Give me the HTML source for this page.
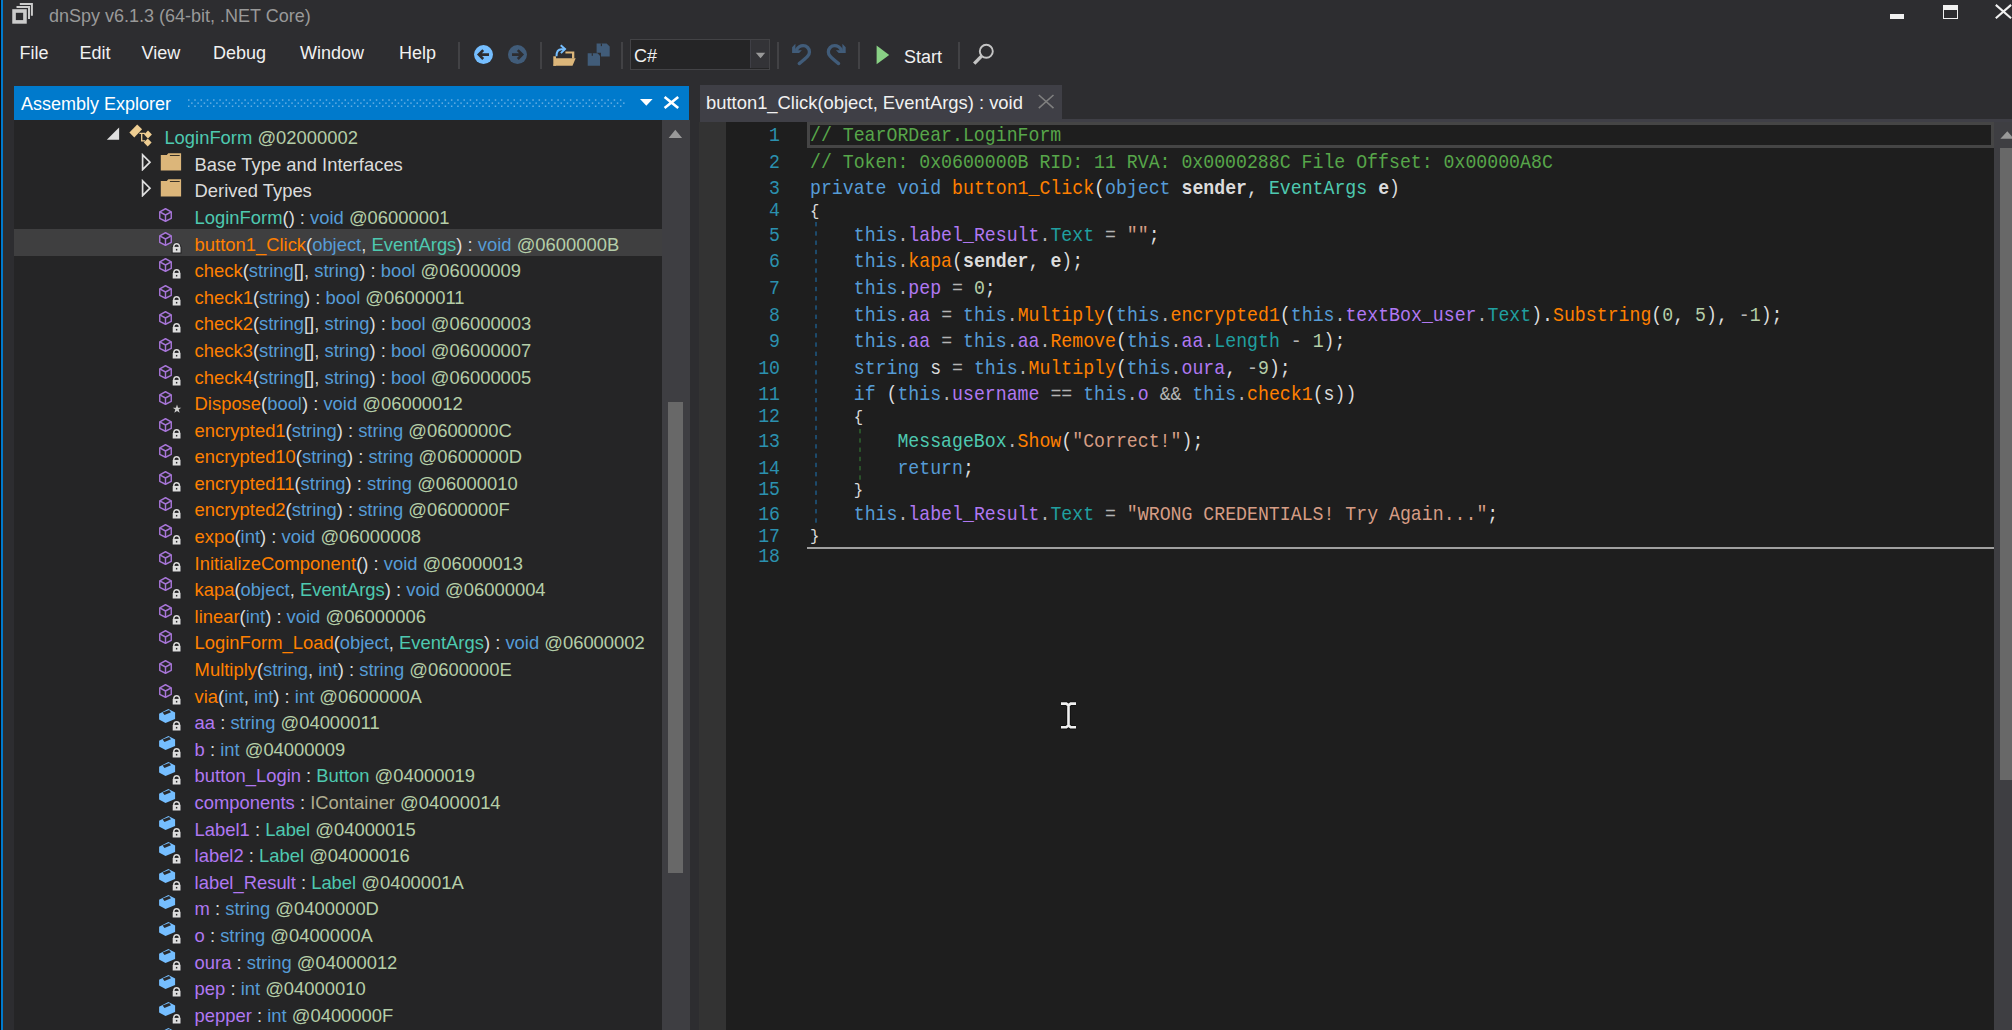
<!DOCTYPE html><html><head><meta charset="utf-8"><style>
*{margin:0;padding:0;box-sizing:border-box}
html,body{width:2012px;height:1030px;overflow:hidden;background:#2D2D30}
body{position:relative;font-family:"Liberation Sans",sans-serif;font-size:18px;color:#F1F1F1}
.a{position:absolute}
.t{position:absolute;white-space:pre;line-height:20px;font-size:18px}
i{font-style:normal}
.row{position:absolute;left:14px;width:648px;height:26.6px}
.rt{position:absolute;white-space:pre;line-height:20px;font-size:18.4px;color:#DCDCDC}
.code{position:absolute;white-space:pre;font-family:"Liberation Mono",monospace;font-size:18.22px;line-height:20px;color:#DCDCDC;transform:scaleY(1.09);transform-origin:0 14.85px}
.code b{font-weight:bold;color:#DCDCDC}
.ln{position:absolute;white-space:pre;font-family:"Liberation Mono",monospace;font-size:18.22px;line-height:20px;color:#2B91AF;text-align:right;width:60px;left:720px;transform:scaleY(1.12);transform-origin:0 14.85px}
</style></head><body>
<div class="a" style="left:0;top:0;width:1.3px;height:1030px;background:#0b0b0b"></div>
<div class="a" style="left:1.3px;top:0;width:1.9px;height:1030px;background:#007ACC"></div>
<svg class="a" style="left:0;top:0" width="40" height="32" viewBox="0 0 40 32">
<g fill="none" stroke="#CCCCCC">
<rect x="14.05" y="11.0" width="10.9" height="10.9" stroke-width="3.6"/>
<path d="M16.5 7.1 H29 V19" stroke-width="2"/>
<path d="M19.8 4 H31.9 V15.8" stroke-width="2"/>
</g></svg>
<div class="t" style="left:49px;top:5.7px;color:#999999">dnSpy v6.1.3 (64-bit, .NET Core)</div>
<div class="a" style="left:1890px;top:13.8px;width:14.4px;height:5px;background:#F1F1F1"></div>
<div class="a" style="left:1943px;top:4.6px;width:14.5px;height:14.4px;border:1.5px solid #F1F1F1;border-top-width:5.2px"></div>
<svg class="a" style="left:1994px;top:3px" width="18" height="18" viewBox="0 0 18 18"><path d="M1.8 1.9 L17.1 15.2 M17.1 1.9 L1.8 15.2" stroke="#F1F1F1" stroke-width="2.1"/></svg>
<div class="t" style="left:19.4px;top:43px">File</div>
<div class="t" style="left:79.5px;top:43px">Edit</div>
<div class="t" style="left:141.5px;top:43px">View</div>
<div class="t" style="left:213px;top:43px">Debug</div>
<div class="t" style="left:300px;top:43px">Window</div>
<div class="t" style="left:399px;top:43px">Help</div>
<div class="a" style="left:458px;top:42px;width:2px;height:27px;background:#424245"></div>
<div class="a" style="left:540px;top:42px;width:2px;height:27px;background:#424245"></div>
<div class="a" style="left:621px;top:42px;width:2px;height:27px;background:#424245"></div>
<div class="a" style="left:777px;top:42px;width:2px;height:27px;background:#424245"></div>
<div class="a" style="left:858px;top:42px;width:2px;height:27px;background:#424245"></div>
<div class="a" style="left:958px;top:42px;width:2px;height:27px;background:#424245"></div>
<svg class="a" style="left:470px;top:40px" width="62" height="30" viewBox="0 0 62 30">
<circle cx="13.5" cy="14.6" r="9.5" fill="#75BEFF"/>
<path d="M9 14.6 H19 M13.2 10.2 L8.8 14.6 L13.2 19" stroke="#2D2D30" stroke-width="2.6" fill="none"/>
<circle cx="47.5" cy="14.6" r="9.5" fill="#415C79"/>
<path d="M42 14.6 H52 M47.8 10.2 L52.2 14.6 L47.8 19" stroke="#2D2D30" stroke-width="2.6" fill="none"/>
</svg>
<svg class="a" style="left:550px;top:40px" width="64" height="30" viewBox="0 0 64 30">
<path d="M3.3 16.3 H6 V25.8 H3.3 Z" fill="#DCB67A"/>
<path d="M15.4 11.5 H24.3 V18.6 H22.0 V13.6 H15.4 Z" fill="#DCB67A"/>
<path d="M6 18.2 H25.7 L22.5 25.8 H3.3 Z" fill="#DCB67A"/>
<path d="M6.5 16.2 C6.4 11.8 8.2 9.3 11.6 9.2 H15.2" stroke="#75BEFF" stroke-width="2" fill="none"/>
<path d="M10.7 5.3 L15.0 9.0 L10.9 13.1" stroke="#75BEFF" stroke-width="2" fill="none"/>
<path d="M37.7 13.2 H47.5 L50 15.7 V25.8 H37.7 Z" fill="#415C79"/>
<path d="M46.6 3.5 H56.6 L59.7 6.4 V16.5 H51 V12.8 H46.6 Z" fill="#415C79"/>
<rect x="41.7" y="13.2" width="1.2" height="2.6" fill="#2D2D30"/>
<rect x="50.8" y="3.5" width="1.2" height="2.6" fill="#2D2D30"/>
</svg>
<div class="a" style="left:630.3px;top:38.9px;width:140px;height:31px;border:1.5px solid #434346;background:#252526"></div>
<div class="a" style="left:750px;top:40.4px;width:18.8px;height:28px;background:#333337;border-left:1.3px solid #3F3F46"></div>
<svg class="a" style="left:755px;top:52px" width="11" height="7" viewBox="0 0 11 7"><path d="M0.8 0.8 H10.2 L5.5 6.3 Z" fill="#999999"/></svg>
<div class="t" style="left:633.9px;top:46.4px">C#</div>
<svg class="a" style="left:788px;top:40px" width="64" height="28" viewBox="0 0 64 28">
<g id="u"><path d="M8.6 9.6 C10.3 6.8 12.3 5.6 15.1 5.6 C18.7 5.6 21.45 8.5 21.45 12 C21.45 15 19.6 17 11.2 23.6" stroke="#415C79" stroke-width="3.3" stroke-linecap="round" fill="none"/>
<path d="M7.4 3.7 L4.1 7.2 V13 H11.1 L13.9 10.2 H7.4 Z" fill="#415C79"/></g>
<use href="#u" transform="translate(61.8 0) scale(-1 1)"/>
</svg>
<svg class="a" style="left:874px;top:43px" width="18" height="24" viewBox="0 0 18 24"><path d="M2.6 2.4 L15.2 11.9 L2.6 21.3 Z" fill="#89D185"/></svg>
<div class="t" style="left:904px;top:47px">Start</div>
<svg class="a" style="left:968px;top:40px" width="30" height="28" viewBox="0 0 30 28">
<circle cx="18.3" cy="11.3" r="6.5" stroke="#C4C4C4" stroke-width="1.9" fill="none"/>
<path d="M13.8 15.9 L6.2 23.6" stroke="#C4C4C4" stroke-width="3.4"/>
</svg>
<div class="a" style="left:14px;top:85.8px;width:675px;height:34.4px;background:#007ACC"></div>
<div class="t" style="left:20.9px;top:94.4px;color:#FFFFFF">Assembly Explorer</div>
<svg class="a" style="left:0;top:0" width="700" height="120" viewBox="0 0 700 120"><g fill="#66AEE3"><rect x="188.00" y="99.3" width="1.5" height="1.5"/><rect x="188.00" y="105.5" width="1.5" height="1.5"/><rect x="191.13" y="102.4" width="1.5" height="1.5"/><rect x="194.26" y="99.3" width="1.5" height="1.5"/><rect x="194.26" y="105.5" width="1.5" height="1.5"/><rect x="197.39" y="102.4" width="1.5" height="1.5"/><rect x="200.52" y="99.3" width="1.5" height="1.5"/><rect x="200.52" y="105.5" width="1.5" height="1.5"/><rect x="203.65" y="102.4" width="1.5" height="1.5"/><rect x="206.78" y="99.3" width="1.5" height="1.5"/><rect x="206.78" y="105.5" width="1.5" height="1.5"/><rect x="209.91" y="102.4" width="1.5" height="1.5"/><rect x="213.04" y="99.3" width="1.5" height="1.5"/><rect x="213.04" y="105.5" width="1.5" height="1.5"/><rect x="216.17" y="102.4" width="1.5" height="1.5"/><rect x="219.30" y="99.3" width="1.5" height="1.5"/><rect x="219.30" y="105.5" width="1.5" height="1.5"/><rect x="222.43" y="102.4" width="1.5" height="1.5"/><rect x="225.56" y="99.3" width="1.5" height="1.5"/><rect x="225.56" y="105.5" width="1.5" height="1.5"/><rect x="228.69" y="102.4" width="1.5" height="1.5"/><rect x="231.82" y="99.3" width="1.5" height="1.5"/><rect x="231.82" y="105.5" width="1.5" height="1.5"/><rect x="234.95" y="102.4" width="1.5" height="1.5"/><rect x="238.08" y="99.3" width="1.5" height="1.5"/><rect x="238.08" y="105.5" width="1.5" height="1.5"/><rect x="241.21" y="102.4" width="1.5" height="1.5"/><rect x="244.34" y="99.3" width="1.5" height="1.5"/><rect x="244.34" y="105.5" width="1.5" height="1.5"/><rect x="247.47" y="102.4" width="1.5" height="1.5"/><rect x="250.60" y="99.3" width="1.5" height="1.5"/><rect x="250.60" y="105.5" width="1.5" height="1.5"/><rect x="253.73" y="102.4" width="1.5" height="1.5"/><rect x="256.86" y="99.3" width="1.5" height="1.5"/><rect x="256.86" y="105.5" width="1.5" height="1.5"/><rect x="259.99" y="102.4" width="1.5" height="1.5"/><rect x="263.12" y="99.3" width="1.5" height="1.5"/><rect x="263.12" y="105.5" width="1.5" height="1.5"/><rect x="266.25" y="102.4" width="1.5" height="1.5"/><rect x="269.38" y="99.3" width="1.5" height="1.5"/><rect x="269.38" y="105.5" width="1.5" height="1.5"/><rect x="272.51" y="102.4" width="1.5" height="1.5"/><rect x="275.64" y="99.3" width="1.5" height="1.5"/><rect x="275.64" y="105.5" width="1.5" height="1.5"/><rect x="278.77" y="102.4" width="1.5" height="1.5"/><rect x="281.90" y="99.3" width="1.5" height="1.5"/><rect x="281.90" y="105.5" width="1.5" height="1.5"/><rect x="285.03" y="102.4" width="1.5" height="1.5"/><rect x="288.16" y="99.3" width="1.5" height="1.5"/><rect x="288.16" y="105.5" width="1.5" height="1.5"/><rect x="291.29" y="102.4" width="1.5" height="1.5"/><rect x="294.42" y="99.3" width="1.5" height="1.5"/><rect x="294.42" y="105.5" width="1.5" height="1.5"/><rect x="297.55" y="102.4" width="1.5" height="1.5"/><rect x="300.68" y="99.3" width="1.5" height="1.5"/><rect x="300.68" y="105.5" width="1.5" height="1.5"/><rect x="303.81" y="102.4" width="1.5" height="1.5"/><rect x="306.94" y="99.3" width="1.5" height="1.5"/><rect x="306.94" y="105.5" width="1.5" height="1.5"/><rect x="310.07" y="102.4" width="1.5" height="1.5"/><rect x="313.20" y="99.3" width="1.5" height="1.5"/><rect x="313.20" y="105.5" width="1.5" height="1.5"/><rect x="316.33" y="102.4" width="1.5" height="1.5"/><rect x="319.46" y="99.3" width="1.5" height="1.5"/><rect x="319.46" y="105.5" width="1.5" height="1.5"/><rect x="322.59" y="102.4" width="1.5" height="1.5"/><rect x="325.72" y="99.3" width="1.5" height="1.5"/><rect x="325.72" y="105.5" width="1.5" height="1.5"/><rect x="328.85" y="102.4" width="1.5" height="1.5"/><rect x="331.98" y="99.3" width="1.5" height="1.5"/><rect x="331.98" y="105.5" width="1.5" height="1.5"/><rect x="335.11" y="102.4" width="1.5" height="1.5"/><rect x="338.24" y="99.3" width="1.5" height="1.5"/><rect x="338.24" y="105.5" width="1.5" height="1.5"/><rect x="341.37" y="102.4" width="1.5" height="1.5"/><rect x="344.50" y="99.3" width="1.5" height="1.5"/><rect x="344.50" y="105.5" width="1.5" height="1.5"/><rect x="347.63" y="102.4" width="1.5" height="1.5"/><rect x="350.76" y="99.3" width="1.5" height="1.5"/><rect x="350.76" y="105.5" width="1.5" height="1.5"/><rect x="353.89" y="102.4" width="1.5" height="1.5"/><rect x="357.02" y="99.3" width="1.5" height="1.5"/><rect x="357.02" y="105.5" width="1.5" height="1.5"/><rect x="360.15" y="102.4" width="1.5" height="1.5"/><rect x="363.28" y="99.3" width="1.5" height="1.5"/><rect x="363.28" y="105.5" width="1.5" height="1.5"/><rect x="366.41" y="102.4" width="1.5" height="1.5"/><rect x="369.54" y="99.3" width="1.5" height="1.5"/><rect x="369.54" y="105.5" width="1.5" height="1.5"/><rect x="372.67" y="102.4" width="1.5" height="1.5"/><rect x="375.80" y="99.3" width="1.5" height="1.5"/><rect x="375.80" y="105.5" width="1.5" height="1.5"/><rect x="378.93" y="102.4" width="1.5" height="1.5"/><rect x="382.06" y="99.3" width="1.5" height="1.5"/><rect x="382.06" y="105.5" width="1.5" height="1.5"/><rect x="385.19" y="102.4" width="1.5" height="1.5"/><rect x="388.32" y="99.3" width="1.5" height="1.5"/><rect x="388.32" y="105.5" width="1.5" height="1.5"/><rect x="391.45" y="102.4" width="1.5" height="1.5"/><rect x="394.58" y="99.3" width="1.5" height="1.5"/><rect x="394.58" y="105.5" width="1.5" height="1.5"/><rect x="397.71" y="102.4" width="1.5" height="1.5"/><rect x="400.84" y="99.3" width="1.5" height="1.5"/><rect x="400.84" y="105.5" width="1.5" height="1.5"/><rect x="403.97" y="102.4" width="1.5" height="1.5"/><rect x="407.10" y="99.3" width="1.5" height="1.5"/><rect x="407.10" y="105.5" width="1.5" height="1.5"/><rect x="410.23" y="102.4" width="1.5" height="1.5"/><rect x="413.36" y="99.3" width="1.5" height="1.5"/><rect x="413.36" y="105.5" width="1.5" height="1.5"/><rect x="416.49" y="102.4" width="1.5" height="1.5"/><rect x="419.62" y="99.3" width="1.5" height="1.5"/><rect x="419.62" y="105.5" width="1.5" height="1.5"/><rect x="422.75" y="102.4" width="1.5" height="1.5"/><rect x="425.88" y="99.3" width="1.5" height="1.5"/><rect x="425.88" y="105.5" width="1.5" height="1.5"/><rect x="429.01" y="102.4" width="1.5" height="1.5"/><rect x="432.14" y="99.3" width="1.5" height="1.5"/><rect x="432.14" y="105.5" width="1.5" height="1.5"/><rect x="435.27" y="102.4" width="1.5" height="1.5"/><rect x="438.40" y="99.3" width="1.5" height="1.5"/><rect x="438.40" y="105.5" width="1.5" height="1.5"/><rect x="441.53" y="102.4" width="1.5" height="1.5"/><rect x="444.66" y="99.3" width="1.5" height="1.5"/><rect x="444.66" y="105.5" width="1.5" height="1.5"/><rect x="447.79" y="102.4" width="1.5" height="1.5"/><rect x="450.92" y="99.3" width="1.5" height="1.5"/><rect x="450.92" y="105.5" width="1.5" height="1.5"/><rect x="454.05" y="102.4" width="1.5" height="1.5"/><rect x="457.18" y="99.3" width="1.5" height="1.5"/><rect x="457.18" y="105.5" width="1.5" height="1.5"/><rect x="460.31" y="102.4" width="1.5" height="1.5"/><rect x="463.44" y="99.3" width="1.5" height="1.5"/><rect x="463.44" y="105.5" width="1.5" height="1.5"/><rect x="466.57" y="102.4" width="1.5" height="1.5"/><rect x="469.70" y="99.3" width="1.5" height="1.5"/><rect x="469.70" y="105.5" width="1.5" height="1.5"/><rect x="472.83" y="102.4" width="1.5" height="1.5"/><rect x="475.96" y="99.3" width="1.5" height="1.5"/><rect x="475.96" y="105.5" width="1.5" height="1.5"/><rect x="479.09" y="102.4" width="1.5" height="1.5"/><rect x="482.22" y="99.3" width="1.5" height="1.5"/><rect x="482.22" y="105.5" width="1.5" height="1.5"/><rect x="485.35" y="102.4" width="1.5" height="1.5"/><rect x="488.48" y="99.3" width="1.5" height="1.5"/><rect x="488.48" y="105.5" width="1.5" height="1.5"/><rect x="491.61" y="102.4" width="1.5" height="1.5"/><rect x="494.74" y="99.3" width="1.5" height="1.5"/><rect x="494.74" y="105.5" width="1.5" height="1.5"/><rect x="497.87" y="102.4" width="1.5" height="1.5"/><rect x="501.00" y="99.3" width="1.5" height="1.5"/><rect x="501.00" y="105.5" width="1.5" height="1.5"/><rect x="504.13" y="102.4" width="1.5" height="1.5"/><rect x="507.26" y="99.3" width="1.5" height="1.5"/><rect x="507.26" y="105.5" width="1.5" height="1.5"/><rect x="510.39" y="102.4" width="1.5" height="1.5"/><rect x="513.52" y="99.3" width="1.5" height="1.5"/><rect x="513.52" y="105.5" width="1.5" height="1.5"/><rect x="516.65" y="102.4" width="1.5" height="1.5"/><rect x="519.78" y="99.3" width="1.5" height="1.5"/><rect x="519.78" y="105.5" width="1.5" height="1.5"/><rect x="522.91" y="102.4" width="1.5" height="1.5"/><rect x="526.04" y="99.3" width="1.5" height="1.5"/><rect x="526.04" y="105.5" width="1.5" height="1.5"/><rect x="529.17" y="102.4" width="1.5" height="1.5"/><rect x="532.30" y="99.3" width="1.5" height="1.5"/><rect x="532.30" y="105.5" width="1.5" height="1.5"/><rect x="535.43" y="102.4" width="1.5" height="1.5"/><rect x="538.56" y="99.3" width="1.5" height="1.5"/><rect x="538.56" y="105.5" width="1.5" height="1.5"/><rect x="541.69" y="102.4" width="1.5" height="1.5"/><rect x="544.82" y="99.3" width="1.5" height="1.5"/><rect x="544.82" y="105.5" width="1.5" height="1.5"/><rect x="547.95" y="102.4" width="1.5" height="1.5"/><rect x="551.08" y="99.3" width="1.5" height="1.5"/><rect x="551.08" y="105.5" width="1.5" height="1.5"/><rect x="554.21" y="102.4" width="1.5" height="1.5"/><rect x="557.34" y="99.3" width="1.5" height="1.5"/><rect x="557.34" y="105.5" width="1.5" height="1.5"/><rect x="560.47" y="102.4" width="1.5" height="1.5"/><rect x="563.60" y="99.3" width="1.5" height="1.5"/><rect x="563.60" y="105.5" width="1.5" height="1.5"/><rect x="566.73" y="102.4" width="1.5" height="1.5"/><rect x="569.86" y="99.3" width="1.5" height="1.5"/><rect x="569.86" y="105.5" width="1.5" height="1.5"/><rect x="572.99" y="102.4" width="1.5" height="1.5"/><rect x="576.12" y="99.3" width="1.5" height="1.5"/><rect x="576.12" y="105.5" width="1.5" height="1.5"/><rect x="579.25" y="102.4" width="1.5" height="1.5"/><rect x="582.38" y="99.3" width="1.5" height="1.5"/><rect x="582.38" y="105.5" width="1.5" height="1.5"/><rect x="585.51" y="102.4" width="1.5" height="1.5"/><rect x="588.64" y="99.3" width="1.5" height="1.5"/><rect x="588.64" y="105.5" width="1.5" height="1.5"/><rect x="591.77" y="102.4" width="1.5" height="1.5"/><rect x="594.90" y="99.3" width="1.5" height="1.5"/><rect x="594.90" y="105.5" width="1.5" height="1.5"/><rect x="598.03" y="102.4" width="1.5" height="1.5"/><rect x="601.16" y="99.3" width="1.5" height="1.5"/><rect x="601.16" y="105.5" width="1.5" height="1.5"/><rect x="604.29" y="102.4" width="1.5" height="1.5"/><rect x="607.42" y="99.3" width="1.5" height="1.5"/><rect x="607.42" y="105.5" width="1.5" height="1.5"/><rect x="610.55" y="102.4" width="1.5" height="1.5"/><rect x="613.68" y="99.3" width="1.5" height="1.5"/><rect x="613.68" y="105.5" width="1.5" height="1.5"/><rect x="616.81" y="102.4" width="1.5" height="1.5"/><rect x="619.94" y="99.3" width="1.5" height="1.5"/><rect x="619.94" y="105.5" width="1.5" height="1.5"/><rect x="623.07" y="102.4" width="1.5" height="1.5"/></g></svg>
<svg class="a" style="left:638px;top:96px" width="16" height="12" viewBox="0 0 16 12"><path d="M2 2.9 H14.6 L8.3 9.7 Z" fill="#FFFFFF"/></svg>
<svg class="a" style="left:661px;top:93px" width="20" height="19" viewBox="0 0 20 19"><path d="M3.6 3.9 L17.2 15.1 M17.2 3.9 L3.6 15.1" stroke="#FFFFFF" stroke-width="2.6"/></svg>
<div class="a" style="left:14px;top:120.2px;width:648px;height:910px;background:#252526"></div>
<div class="a" style="left:662px;top:120.2px;width:27.5px;height:910px;background:#3E3E42"></div>
<svg class="a" style="left:666px;top:127px" width="18" height="13" viewBox="0 0 18 13"><path d="M2.6 10.9 L9.3 2.7 L16.1 10.9 Z" fill="#999999"/></svg>
<div class="a" style="left:668px;top:401.6px;width:14.5px;height:471.7px;background:#686868"></div>
<svg class="a" style="left:105px;top:126.30px" width="16" height="16" viewBox="0 0 16 16"><path d="M14.1 1.6 V13.7 H1.8 Z" fill="#E0E0E0"/></svg>
<svg class="a" style="left:128px;top:123.30px" width="26" height="27" viewBox="0 0 26 27"><path d="M11.4 10.3 H17 M13.7 10.3 V17.8 H17" stroke="#EFCE92" stroke-width="1.3" fill="none"/><g fill="#EFCE92"><path d="M9.2 1.5 L14.1 6.3 L6.3 14.5 L1.4 9.4 Z"/><path d="M20 7.6 L23.9 11.5 L20 15.4 L16.1 11.5 Z"/><path d="M19.7 15.6 L23.6 19.5 L19.7 23.4 L15.8 19.5 Z"/></g></svg>
<div class="rt" style="left:164.4px;top:128.22px"><i style="color:#4EC9B0">LoginForm</i><i style="color:#B5CEA8"> @02000002</i></div>
<svg class="a" style="left:140px;top:152.89px" width="12" height="18" viewBox="0 0 12 18"><path d="M2.6 1.8 L10 9.2 L2.6 16.6 Z" fill="none" stroke="#E0E0E0" stroke-width="1.7"/></svg>
<svg class="a" style="left:160px;top:151.89px" width="22" height="19" viewBox="0 0 22 19"><path d="M0.8 3 H6.8 L8.3 1.2 H21.1 V18.5 H0.8 Z" fill="#DCB67A"/><rect x="9.9" y="3.0" width="9.8" height="1" fill="#3a3328"/></svg>
<div class="rt" style="left:194.6px;top:154.81px">Base Type and Interfaces</div>
<svg class="a" style="left:140px;top:179.48px" width="12" height="18" viewBox="0 0 12 18"><path d="M2.6 1.8 L10 9.2 L2.6 16.6 Z" fill="none" stroke="#E0E0E0" stroke-width="1.7"/></svg>
<svg class="a" style="left:160px;top:178.48px" width="22" height="19" viewBox="0 0 22 19"><path d="M0.8 3 H6.8 L8.3 1.2 H21.1 V18.5 H0.8 Z" fill="#DCB67A"/><rect x="9.9" y="3.0" width="9.8" height="1" fill="#3a3328"/></svg>
<div class="rt" style="left:194.6px;top:181.40px">Derived Types</div>
<svg class="a" style="left:159px;top:208.17px" width="14" height="15" viewBox="0 0 14 15"><g fill="#252526" stroke="#A675D6" stroke-width="1.45" stroke-linejoin="round"><path d="M6.5 0.75 L12.25 3.9 V10.3 L6.5 13.25 L0.75 10.3 V3.9 Z"/><path d="M0.75 3.9 L6.5 7.0 L12.25 3.9 M6.5 7.0 V13.25" fill="none"/></g></svg>
<div class="rt" style="left:194.6px;top:207.99px"><i style="color:#4EC9B0">LoginForm</i><i style="color:#DCDCDC">(</i><i style="color:#DCDCDC">)</i><i style="color:#DCDCDC"> : </i><i style="color:#569CD6">void</i><i style="color:#B5CEA8"> @06000001</i></div>
<div class="a" style="left:14px;top:229.46px;width:648px;height:26.3px;background:#3F3F40"></div>
<svg class="a" style="left:159px;top:231.56px" width="14" height="15" viewBox="0 0 14 15"><g fill="#252526" stroke="#A675D6" stroke-width="1.45" stroke-linejoin="round"><path d="M6.5 0.75 L12.25 3.9 V10.3 L6.5 13.25 L0.75 10.3 V3.9 Z"/><path d="M0.75 3.9 L6.5 7.0 L12.25 3.9 M6.5 7.0 V13.25" fill="none"/></g></svg>
<svg class="a" style="left:171.0px;top:241.86px" width="11" height="12" viewBox="0 0 11 12"><path d="M2.8 5.2 V4.3 C2.8 1.2 8.4 1.2 8.4 4.3 V5.2" stroke="#252526" stroke-width="3.0" fill="none"/><rect x="0.6" y="4.4" width="10" height="7.2" fill="#252526"/><path d="M2.8 5.1 V4.4 C2.8 0.8 8.4 0.8 8.4 4.4 V5.1" stroke="#DDDDDD" stroke-width="1.5" fill="none"/><rect x="1.7" y="4.9" width="7.8" height="5.6" fill="#DDDDDD"/><rect x="4.9" y="6.9" width="1.4" height="1.6" fill="#252526"/></svg>
<div class="rt" style="left:194.6px;top:234.58px"><i style="color:#FF8000">button1_Click</i><i style="color:#DCDCDC">(</i><i style="color:#569CD6">object</i><i style="color:#DCDCDC">, </i><i style="color:#4EC9B0">EventArgs</i><i style="color:#DCDCDC">)</i><i style="color:#DCDCDC"> : </i><i style="color:#569CD6">void</i><i style="color:#B5CEA8"> @0600000B</i></div>
<svg class="a" style="left:159px;top:258.15px" width="14" height="15" viewBox="0 0 14 15"><g fill="#252526" stroke="#A675D6" stroke-width="1.45" stroke-linejoin="round"><path d="M6.5 0.75 L12.25 3.9 V10.3 L6.5 13.25 L0.75 10.3 V3.9 Z"/><path d="M0.75 3.9 L6.5 7.0 L12.25 3.9 M6.5 7.0 V13.25" fill="none"/></g></svg>
<svg class="a" style="left:171.0px;top:268.45px" width="11" height="12" viewBox="0 0 11 12"><path d="M2.8 5.2 V4.3 C2.8 1.2 8.4 1.2 8.4 4.3 V5.2" stroke="#252526" stroke-width="3.0" fill="none"/><rect x="0.6" y="4.4" width="10" height="7.2" fill="#252526"/><path d="M2.8 5.1 V4.4 C2.8 0.8 8.4 0.8 8.4 4.4 V5.1" stroke="#DDDDDD" stroke-width="1.5" fill="none"/><rect x="1.7" y="4.9" width="7.8" height="5.6" fill="#DDDDDD"/><rect x="4.9" y="6.9" width="1.4" height="1.6" fill="#252526"/></svg>
<div class="rt" style="left:194.6px;top:261.17px"><i style="color:#FF8000">check</i><i style="color:#DCDCDC">(</i><i style="color:#569CD6">string</i><i style="color:#DCDCDC">[]</i><i style="color:#DCDCDC">, </i><i style="color:#569CD6">string</i><i style="color:#DCDCDC">)</i><i style="color:#DCDCDC"> : </i><i style="color:#569CD6">bool</i><i style="color:#B5CEA8"> @06000009</i></div>
<svg class="a" style="left:159px;top:284.74px" width="14" height="15" viewBox="0 0 14 15"><g fill="#252526" stroke="#A675D6" stroke-width="1.45" stroke-linejoin="round"><path d="M6.5 0.75 L12.25 3.9 V10.3 L6.5 13.25 L0.75 10.3 V3.9 Z"/><path d="M0.75 3.9 L6.5 7.0 L12.25 3.9 M6.5 7.0 V13.25" fill="none"/></g></svg>
<svg class="a" style="left:171.0px;top:295.04px" width="11" height="12" viewBox="0 0 11 12"><path d="M2.8 5.2 V4.3 C2.8 1.2 8.4 1.2 8.4 4.3 V5.2" stroke="#252526" stroke-width="3.0" fill="none"/><rect x="0.6" y="4.4" width="10" height="7.2" fill="#252526"/><path d="M2.8 5.1 V4.4 C2.8 0.8 8.4 0.8 8.4 4.4 V5.1" stroke="#DDDDDD" stroke-width="1.5" fill="none"/><rect x="1.7" y="4.9" width="7.8" height="5.6" fill="#DDDDDD"/><rect x="4.9" y="6.9" width="1.4" height="1.6" fill="#252526"/></svg>
<div class="rt" style="left:194.6px;top:287.76px"><i style="color:#FF8000">check1</i><i style="color:#DCDCDC">(</i><i style="color:#569CD6">string</i><i style="color:#DCDCDC">)</i><i style="color:#DCDCDC"> : </i><i style="color:#569CD6">bool</i><i style="color:#B5CEA8"> @06000011</i></div>
<svg class="a" style="left:159px;top:311.33px" width="14" height="15" viewBox="0 0 14 15"><g fill="#252526" stroke="#A675D6" stroke-width="1.45" stroke-linejoin="round"><path d="M6.5 0.75 L12.25 3.9 V10.3 L6.5 13.25 L0.75 10.3 V3.9 Z"/><path d="M0.75 3.9 L6.5 7.0 L12.25 3.9 M6.5 7.0 V13.25" fill="none"/></g></svg>
<svg class="a" style="left:171.0px;top:321.63px" width="11" height="12" viewBox="0 0 11 12"><path d="M2.8 5.2 V4.3 C2.8 1.2 8.4 1.2 8.4 4.3 V5.2" stroke="#252526" stroke-width="3.0" fill="none"/><rect x="0.6" y="4.4" width="10" height="7.2" fill="#252526"/><path d="M2.8 5.1 V4.4 C2.8 0.8 8.4 0.8 8.4 4.4 V5.1" stroke="#DDDDDD" stroke-width="1.5" fill="none"/><rect x="1.7" y="4.9" width="7.8" height="5.6" fill="#DDDDDD"/><rect x="4.9" y="6.9" width="1.4" height="1.6" fill="#252526"/></svg>
<div class="rt" style="left:194.6px;top:314.35px"><i style="color:#FF8000">check2</i><i style="color:#DCDCDC">(</i><i style="color:#569CD6">string</i><i style="color:#DCDCDC">[]</i><i style="color:#DCDCDC">, </i><i style="color:#569CD6">string</i><i style="color:#DCDCDC">)</i><i style="color:#DCDCDC"> : </i><i style="color:#569CD6">bool</i><i style="color:#B5CEA8"> @06000003</i></div>
<svg class="a" style="left:159px;top:337.92px" width="14" height="15" viewBox="0 0 14 15"><g fill="#252526" stroke="#A675D6" stroke-width="1.45" stroke-linejoin="round"><path d="M6.5 0.75 L12.25 3.9 V10.3 L6.5 13.25 L0.75 10.3 V3.9 Z"/><path d="M0.75 3.9 L6.5 7.0 L12.25 3.9 M6.5 7.0 V13.25" fill="none"/></g></svg>
<svg class="a" style="left:171.0px;top:348.22px" width="11" height="12" viewBox="0 0 11 12"><path d="M2.8 5.2 V4.3 C2.8 1.2 8.4 1.2 8.4 4.3 V5.2" stroke="#252526" stroke-width="3.0" fill="none"/><rect x="0.6" y="4.4" width="10" height="7.2" fill="#252526"/><path d="M2.8 5.1 V4.4 C2.8 0.8 8.4 0.8 8.4 4.4 V5.1" stroke="#DDDDDD" stroke-width="1.5" fill="none"/><rect x="1.7" y="4.9" width="7.8" height="5.6" fill="#DDDDDD"/><rect x="4.9" y="6.9" width="1.4" height="1.6" fill="#252526"/></svg>
<div class="rt" style="left:194.6px;top:340.94px"><i style="color:#FF8000">check3</i><i style="color:#DCDCDC">(</i><i style="color:#569CD6">string</i><i style="color:#DCDCDC">[]</i><i style="color:#DCDCDC">, </i><i style="color:#569CD6">string</i><i style="color:#DCDCDC">)</i><i style="color:#DCDCDC"> : </i><i style="color:#569CD6">bool</i><i style="color:#B5CEA8"> @06000007</i></div>
<svg class="a" style="left:159px;top:364.51px" width="14" height="15" viewBox="0 0 14 15"><g fill="#252526" stroke="#A675D6" stroke-width="1.45" stroke-linejoin="round"><path d="M6.5 0.75 L12.25 3.9 V10.3 L6.5 13.25 L0.75 10.3 V3.9 Z"/><path d="M0.75 3.9 L6.5 7.0 L12.25 3.9 M6.5 7.0 V13.25" fill="none"/></g></svg>
<svg class="a" style="left:171.0px;top:374.81px" width="11" height="12" viewBox="0 0 11 12"><path d="M2.8 5.2 V4.3 C2.8 1.2 8.4 1.2 8.4 4.3 V5.2" stroke="#252526" stroke-width="3.0" fill="none"/><rect x="0.6" y="4.4" width="10" height="7.2" fill="#252526"/><path d="M2.8 5.1 V4.4 C2.8 0.8 8.4 0.8 8.4 4.4 V5.1" stroke="#DDDDDD" stroke-width="1.5" fill="none"/><rect x="1.7" y="4.9" width="7.8" height="5.6" fill="#DDDDDD"/><rect x="4.9" y="6.9" width="1.4" height="1.6" fill="#252526"/></svg>
<div class="rt" style="left:194.6px;top:367.53px"><i style="color:#FF8000">check4</i><i style="color:#DCDCDC">(</i><i style="color:#569CD6">string</i><i style="color:#DCDCDC">[]</i><i style="color:#DCDCDC">, </i><i style="color:#569CD6">string</i><i style="color:#DCDCDC">)</i><i style="color:#DCDCDC"> : </i><i style="color:#569CD6">bool</i><i style="color:#B5CEA8"> @06000005</i></div>
<svg class="a" style="left:159px;top:391.10px" width="14" height="15" viewBox="0 0 14 15"><g fill="#252526" stroke="#A675D6" stroke-width="1.45" stroke-linejoin="round"><path d="M6.5 0.75 L12.25 3.9 V10.3 L6.5 13.25 L0.75 10.3 V3.9 Z"/><path d="M0.75 3.9 L6.5 7.0 L12.25 3.9 M6.5 7.0 V13.25" fill="none"/></g></svg>
<svg class="a" style="left:172px;top:403.7px" width="10" height="10" viewBox="0 0 10 10"><path d="M5 0.6 L6.1 3.7 L9.3 3.7 L6.7 5.6 L7.7 8.8 L5 6.9 L2.3 8.8 L3.3 5.6 L0.7 3.7 L3.9 3.7 Z" fill="#CCCCCC"/></svg>
<div class="rt" style="left:194.6px;top:394.12px"><i style="color:#FF8000">Dispose</i><i style="color:#DCDCDC">(</i><i style="color:#569CD6">bool</i><i style="color:#DCDCDC">)</i><i style="color:#DCDCDC"> : </i><i style="color:#569CD6">void</i><i style="color:#B5CEA8"> @06000012</i></div>
<svg class="a" style="left:159px;top:417.69px" width="14" height="15" viewBox="0 0 14 15"><g fill="#252526" stroke="#A675D6" stroke-width="1.45" stroke-linejoin="round"><path d="M6.5 0.75 L12.25 3.9 V10.3 L6.5 13.25 L0.75 10.3 V3.9 Z"/><path d="M0.75 3.9 L6.5 7.0 L12.25 3.9 M6.5 7.0 V13.25" fill="none"/></g></svg>
<svg class="a" style="left:171.0px;top:427.99px" width="11" height="12" viewBox="0 0 11 12"><path d="M2.8 5.2 V4.3 C2.8 1.2 8.4 1.2 8.4 4.3 V5.2" stroke="#252526" stroke-width="3.0" fill="none"/><rect x="0.6" y="4.4" width="10" height="7.2" fill="#252526"/><path d="M2.8 5.1 V4.4 C2.8 0.8 8.4 0.8 8.4 4.4 V5.1" stroke="#DDDDDD" stroke-width="1.5" fill="none"/><rect x="1.7" y="4.9" width="7.8" height="5.6" fill="#DDDDDD"/><rect x="4.9" y="6.9" width="1.4" height="1.6" fill="#252526"/></svg>
<div class="rt" style="left:194.6px;top:420.71px"><i style="color:#FF8000">encrypted1</i><i style="color:#DCDCDC">(</i><i style="color:#569CD6">string</i><i style="color:#DCDCDC">)</i><i style="color:#DCDCDC"> : </i><i style="color:#569CD6">string</i><i style="color:#B5CEA8"> @0600000C</i></div>
<svg class="a" style="left:159px;top:444.28px" width="14" height="15" viewBox="0 0 14 15"><g fill="#252526" stroke="#A675D6" stroke-width="1.45" stroke-linejoin="round"><path d="M6.5 0.75 L12.25 3.9 V10.3 L6.5 13.25 L0.75 10.3 V3.9 Z"/><path d="M0.75 3.9 L6.5 7.0 L12.25 3.9 M6.5 7.0 V13.25" fill="none"/></g></svg>
<svg class="a" style="left:171.0px;top:454.58px" width="11" height="12" viewBox="0 0 11 12"><path d="M2.8 5.2 V4.3 C2.8 1.2 8.4 1.2 8.4 4.3 V5.2" stroke="#252526" stroke-width="3.0" fill="none"/><rect x="0.6" y="4.4" width="10" height="7.2" fill="#252526"/><path d="M2.8 5.1 V4.4 C2.8 0.8 8.4 0.8 8.4 4.4 V5.1" stroke="#DDDDDD" stroke-width="1.5" fill="none"/><rect x="1.7" y="4.9" width="7.8" height="5.6" fill="#DDDDDD"/><rect x="4.9" y="6.9" width="1.4" height="1.6" fill="#252526"/></svg>
<div class="rt" style="left:194.6px;top:447.30px"><i style="color:#FF8000">encrypted10</i><i style="color:#DCDCDC">(</i><i style="color:#569CD6">string</i><i style="color:#DCDCDC">)</i><i style="color:#DCDCDC"> : </i><i style="color:#569CD6">string</i><i style="color:#B5CEA8"> @0600000D</i></div>
<svg class="a" style="left:159px;top:470.87px" width="14" height="15" viewBox="0 0 14 15"><g fill="#252526" stroke="#A675D6" stroke-width="1.45" stroke-linejoin="round"><path d="M6.5 0.75 L12.25 3.9 V10.3 L6.5 13.25 L0.75 10.3 V3.9 Z"/><path d="M0.75 3.9 L6.5 7.0 L12.25 3.9 M6.5 7.0 V13.25" fill="none"/></g></svg>
<svg class="a" style="left:171.0px;top:481.17px" width="11" height="12" viewBox="0 0 11 12"><path d="M2.8 5.2 V4.3 C2.8 1.2 8.4 1.2 8.4 4.3 V5.2" stroke="#252526" stroke-width="3.0" fill="none"/><rect x="0.6" y="4.4" width="10" height="7.2" fill="#252526"/><path d="M2.8 5.1 V4.4 C2.8 0.8 8.4 0.8 8.4 4.4 V5.1" stroke="#DDDDDD" stroke-width="1.5" fill="none"/><rect x="1.7" y="4.9" width="7.8" height="5.6" fill="#DDDDDD"/><rect x="4.9" y="6.9" width="1.4" height="1.6" fill="#252526"/></svg>
<div class="rt" style="left:194.6px;top:473.89px"><i style="color:#FF8000">encrypted11</i><i style="color:#DCDCDC">(</i><i style="color:#569CD6">string</i><i style="color:#DCDCDC">)</i><i style="color:#DCDCDC"> : </i><i style="color:#569CD6">string</i><i style="color:#B5CEA8"> @06000010</i></div>
<svg class="a" style="left:159px;top:497.46px" width="14" height="15" viewBox="0 0 14 15"><g fill="#252526" stroke="#A675D6" stroke-width="1.45" stroke-linejoin="round"><path d="M6.5 0.75 L12.25 3.9 V10.3 L6.5 13.25 L0.75 10.3 V3.9 Z"/><path d="M0.75 3.9 L6.5 7.0 L12.25 3.9 M6.5 7.0 V13.25" fill="none"/></g></svg>
<svg class="a" style="left:171.0px;top:507.76px" width="11" height="12" viewBox="0 0 11 12"><path d="M2.8 5.2 V4.3 C2.8 1.2 8.4 1.2 8.4 4.3 V5.2" stroke="#252526" stroke-width="3.0" fill="none"/><rect x="0.6" y="4.4" width="10" height="7.2" fill="#252526"/><path d="M2.8 5.1 V4.4 C2.8 0.8 8.4 0.8 8.4 4.4 V5.1" stroke="#DDDDDD" stroke-width="1.5" fill="none"/><rect x="1.7" y="4.9" width="7.8" height="5.6" fill="#DDDDDD"/><rect x="4.9" y="6.9" width="1.4" height="1.6" fill="#252526"/></svg>
<div class="rt" style="left:194.6px;top:500.48px"><i style="color:#FF8000">encrypted2</i><i style="color:#DCDCDC">(</i><i style="color:#569CD6">string</i><i style="color:#DCDCDC">)</i><i style="color:#DCDCDC"> : </i><i style="color:#569CD6">string</i><i style="color:#B5CEA8"> @0600000F</i></div>
<svg class="a" style="left:159px;top:524.05px" width="14" height="15" viewBox="0 0 14 15"><g fill="#252526" stroke="#A675D6" stroke-width="1.45" stroke-linejoin="round"><path d="M6.5 0.75 L12.25 3.9 V10.3 L6.5 13.25 L0.75 10.3 V3.9 Z"/><path d="M0.75 3.9 L6.5 7.0 L12.25 3.9 M6.5 7.0 V13.25" fill="none"/></g></svg>
<svg class="a" style="left:171.0px;top:534.35px" width="11" height="12" viewBox="0 0 11 12"><path d="M2.8 5.2 V4.3 C2.8 1.2 8.4 1.2 8.4 4.3 V5.2" stroke="#252526" stroke-width="3.0" fill="none"/><rect x="0.6" y="4.4" width="10" height="7.2" fill="#252526"/><path d="M2.8 5.1 V4.4 C2.8 0.8 8.4 0.8 8.4 4.4 V5.1" stroke="#DDDDDD" stroke-width="1.5" fill="none"/><rect x="1.7" y="4.9" width="7.8" height="5.6" fill="#DDDDDD"/><rect x="4.9" y="6.9" width="1.4" height="1.6" fill="#252526"/></svg>
<div class="rt" style="left:194.6px;top:527.07px"><i style="color:#FF8000">expo</i><i style="color:#DCDCDC">(</i><i style="color:#569CD6">int</i><i style="color:#DCDCDC">)</i><i style="color:#DCDCDC"> : </i><i style="color:#569CD6">void</i><i style="color:#B5CEA8"> @06000008</i></div>
<svg class="a" style="left:159px;top:550.64px" width="14" height="15" viewBox="0 0 14 15"><g fill="#252526" stroke="#A675D6" stroke-width="1.45" stroke-linejoin="round"><path d="M6.5 0.75 L12.25 3.9 V10.3 L6.5 13.25 L0.75 10.3 V3.9 Z"/><path d="M0.75 3.9 L6.5 7.0 L12.25 3.9 M6.5 7.0 V13.25" fill="none"/></g></svg>
<svg class="a" style="left:171.0px;top:560.94px" width="11" height="12" viewBox="0 0 11 12"><path d="M2.8 5.2 V4.3 C2.8 1.2 8.4 1.2 8.4 4.3 V5.2" stroke="#252526" stroke-width="3.0" fill="none"/><rect x="0.6" y="4.4" width="10" height="7.2" fill="#252526"/><path d="M2.8 5.1 V4.4 C2.8 0.8 8.4 0.8 8.4 4.4 V5.1" stroke="#DDDDDD" stroke-width="1.5" fill="none"/><rect x="1.7" y="4.9" width="7.8" height="5.6" fill="#DDDDDD"/><rect x="4.9" y="6.9" width="1.4" height="1.6" fill="#252526"/></svg>
<div class="rt" style="left:194.6px;top:553.66px"><i style="color:#FF8000">InitializeComponent</i><i style="color:#DCDCDC">(</i><i style="color:#DCDCDC">)</i><i style="color:#DCDCDC"> : </i><i style="color:#569CD6">void</i><i style="color:#B5CEA8"> @06000013</i></div>
<svg class="a" style="left:159px;top:577.23px" width="14" height="15" viewBox="0 0 14 15"><g fill="#252526" stroke="#A675D6" stroke-width="1.45" stroke-linejoin="round"><path d="M6.5 0.75 L12.25 3.9 V10.3 L6.5 13.25 L0.75 10.3 V3.9 Z"/><path d="M0.75 3.9 L6.5 7.0 L12.25 3.9 M6.5 7.0 V13.25" fill="none"/></g></svg>
<svg class="a" style="left:171.0px;top:587.53px" width="11" height="12" viewBox="0 0 11 12"><path d="M2.8 5.2 V4.3 C2.8 1.2 8.4 1.2 8.4 4.3 V5.2" stroke="#252526" stroke-width="3.0" fill="none"/><rect x="0.6" y="4.4" width="10" height="7.2" fill="#252526"/><path d="M2.8 5.1 V4.4 C2.8 0.8 8.4 0.8 8.4 4.4 V5.1" stroke="#DDDDDD" stroke-width="1.5" fill="none"/><rect x="1.7" y="4.9" width="7.8" height="5.6" fill="#DDDDDD"/><rect x="4.9" y="6.9" width="1.4" height="1.6" fill="#252526"/></svg>
<div class="rt" style="left:194.6px;top:580.25px"><i style="color:#FF8000">kapa</i><i style="color:#DCDCDC">(</i><i style="color:#569CD6">object</i><i style="color:#DCDCDC">, </i><i style="color:#4EC9B0">EventArgs</i><i style="color:#DCDCDC">)</i><i style="color:#DCDCDC"> : </i><i style="color:#569CD6">void</i><i style="color:#B5CEA8"> @06000004</i></div>
<svg class="a" style="left:159px;top:603.82px" width="14" height="15" viewBox="0 0 14 15"><g fill="#252526" stroke="#A675D6" stroke-width="1.45" stroke-linejoin="round"><path d="M6.5 0.75 L12.25 3.9 V10.3 L6.5 13.25 L0.75 10.3 V3.9 Z"/><path d="M0.75 3.9 L6.5 7.0 L12.25 3.9 M6.5 7.0 V13.25" fill="none"/></g></svg>
<svg class="a" style="left:171.0px;top:614.12px" width="11" height="12" viewBox="0 0 11 12"><path d="M2.8 5.2 V4.3 C2.8 1.2 8.4 1.2 8.4 4.3 V5.2" stroke="#252526" stroke-width="3.0" fill="none"/><rect x="0.6" y="4.4" width="10" height="7.2" fill="#252526"/><path d="M2.8 5.1 V4.4 C2.8 0.8 8.4 0.8 8.4 4.4 V5.1" stroke="#DDDDDD" stroke-width="1.5" fill="none"/><rect x="1.7" y="4.9" width="7.8" height="5.6" fill="#DDDDDD"/><rect x="4.9" y="6.9" width="1.4" height="1.6" fill="#252526"/></svg>
<div class="rt" style="left:194.6px;top:606.84px"><i style="color:#FF8000">linear</i><i style="color:#DCDCDC">(</i><i style="color:#569CD6">int</i><i style="color:#DCDCDC">)</i><i style="color:#DCDCDC"> : </i><i style="color:#569CD6">void</i><i style="color:#B5CEA8"> @06000006</i></div>
<svg class="a" style="left:159px;top:630.41px" width="14" height="15" viewBox="0 0 14 15"><g fill="#252526" stroke="#A675D6" stroke-width="1.45" stroke-linejoin="round"><path d="M6.5 0.75 L12.25 3.9 V10.3 L6.5 13.25 L0.75 10.3 V3.9 Z"/><path d="M0.75 3.9 L6.5 7.0 L12.25 3.9 M6.5 7.0 V13.25" fill="none"/></g></svg>
<svg class="a" style="left:171.0px;top:640.71px" width="11" height="12" viewBox="0 0 11 12"><path d="M2.8 5.2 V4.3 C2.8 1.2 8.4 1.2 8.4 4.3 V5.2" stroke="#252526" stroke-width="3.0" fill="none"/><rect x="0.6" y="4.4" width="10" height="7.2" fill="#252526"/><path d="M2.8 5.1 V4.4 C2.8 0.8 8.4 0.8 8.4 4.4 V5.1" stroke="#DDDDDD" stroke-width="1.5" fill="none"/><rect x="1.7" y="4.9" width="7.8" height="5.6" fill="#DDDDDD"/><rect x="4.9" y="6.9" width="1.4" height="1.6" fill="#252526"/></svg>
<div class="rt" style="left:194.6px;top:633.43px"><i style="color:#FF8000">LoginForm_Load</i><i style="color:#DCDCDC">(</i><i style="color:#569CD6">object</i><i style="color:#DCDCDC">, </i><i style="color:#4EC9B0">EventArgs</i><i style="color:#DCDCDC">)</i><i style="color:#DCDCDC"> : </i><i style="color:#569CD6">void</i><i style="color:#B5CEA8"> @06000002</i></div>
<svg class="a" style="left:159px;top:660.20px" width="14" height="15" viewBox="0 0 14 15"><g fill="#252526" stroke="#A675D6" stroke-width="1.45" stroke-linejoin="round"><path d="M6.5 0.75 L12.25 3.9 V10.3 L6.5 13.25 L0.75 10.3 V3.9 Z"/><path d="M0.75 3.9 L6.5 7.0 L12.25 3.9 M6.5 7.0 V13.25" fill="none"/></g></svg>
<div class="rt" style="left:194.6px;top:660.02px"><i style="color:#FF8000">Multiply</i><i style="color:#DCDCDC">(</i><i style="color:#569CD6">string</i><i style="color:#DCDCDC">, </i><i style="color:#569CD6">int</i><i style="color:#DCDCDC">)</i><i style="color:#DCDCDC"> : </i><i style="color:#569CD6">string</i><i style="color:#B5CEA8"> @0600000E</i></div>
<svg class="a" style="left:159px;top:683.59px" width="14" height="15" viewBox="0 0 14 15"><g fill="#252526" stroke="#A675D6" stroke-width="1.45" stroke-linejoin="round"><path d="M6.5 0.75 L12.25 3.9 V10.3 L6.5 13.25 L0.75 10.3 V3.9 Z"/><path d="M0.75 3.9 L6.5 7.0 L12.25 3.9 M6.5 7.0 V13.25" fill="none"/></g></svg>
<svg class="a" style="left:171.0px;top:693.89px" width="11" height="12" viewBox="0 0 11 12"><path d="M2.8 5.2 V4.3 C2.8 1.2 8.4 1.2 8.4 4.3 V5.2" stroke="#252526" stroke-width="3.0" fill="none"/><rect x="0.6" y="4.4" width="10" height="7.2" fill="#252526"/><path d="M2.8 5.1 V4.4 C2.8 0.8 8.4 0.8 8.4 4.4 V5.1" stroke="#DDDDDD" stroke-width="1.5" fill="none"/><rect x="1.7" y="4.9" width="7.8" height="5.6" fill="#DDDDDD"/><rect x="4.9" y="6.9" width="1.4" height="1.6" fill="#252526"/></svg>
<div class="rt" style="left:194.6px;top:686.61px"><i style="color:#FF8000">via</i><i style="color:#DCDCDC">(</i><i style="color:#569CD6">int</i><i style="color:#DCDCDC">, </i><i style="color:#569CD6">int</i><i style="color:#DCDCDC">)</i><i style="color:#DCDCDC"> : </i><i style="color:#569CD6">int</i><i style="color:#B5CEA8"> @0600000A</i></div>
<svg class="a" style="left:158px;top:708.28px" width="18" height="16" viewBox="0 0 18 16"><path d="M10.4 1.0 L17.1 4.4 V10.9 L7.5 15.1 L1.1 11.4 V5.8 Z" fill="#75BEFF"/><path d="M4.6 4.6 L11.2 2.0 L13 4.3 L6.5 7.0 Z" fill="#2A2A2C"/></svg>
<svg class="a" style="left:171.0px;top:720.48px" width="11" height="12" viewBox="0 0 11 12"><path d="M2.8 5.2 V4.3 C2.8 1.2 8.4 1.2 8.4 4.3 V5.2" stroke="#252526" stroke-width="3.0" fill="none"/><rect x="0.6" y="4.4" width="10" height="7.2" fill="#252526"/><path d="M2.8 5.1 V4.4 C2.8 0.8 8.4 0.8 8.4 4.4 V5.1" stroke="#DDDDDD" stroke-width="1.5" fill="none"/><rect x="1.7" y="4.9" width="7.8" height="5.6" fill="#DDDDDD"/><rect x="4.9" y="6.9" width="1.4" height="1.6" fill="#252526"/></svg>
<div class="rt" style="left:194.6px;top:713.20px"><i style="color:#B078F2">aa</i><i style="color:#DCDCDC"> : </i><i style="color:#569CD6">string</i><i style="color:#B5CEA8"> @04000011</i></div>
<svg class="a" style="left:158px;top:734.87px" width="18" height="16" viewBox="0 0 18 16"><path d="M10.4 1.0 L17.1 4.4 V10.9 L7.5 15.1 L1.1 11.4 V5.8 Z" fill="#75BEFF"/><path d="M4.6 4.6 L11.2 2.0 L13 4.3 L6.5 7.0 Z" fill="#2A2A2C"/></svg>
<svg class="a" style="left:171.0px;top:747.07px" width="11" height="12" viewBox="0 0 11 12"><path d="M2.8 5.2 V4.3 C2.8 1.2 8.4 1.2 8.4 4.3 V5.2" stroke="#252526" stroke-width="3.0" fill="none"/><rect x="0.6" y="4.4" width="10" height="7.2" fill="#252526"/><path d="M2.8 5.1 V4.4 C2.8 0.8 8.4 0.8 8.4 4.4 V5.1" stroke="#DDDDDD" stroke-width="1.5" fill="none"/><rect x="1.7" y="4.9" width="7.8" height="5.6" fill="#DDDDDD"/><rect x="4.9" y="6.9" width="1.4" height="1.6" fill="#252526"/></svg>
<div class="rt" style="left:194.6px;top:739.79px"><i style="color:#B078F2">b</i><i style="color:#DCDCDC"> : </i><i style="color:#569CD6">int</i><i style="color:#B5CEA8"> @04000009</i></div>
<svg class="a" style="left:158px;top:761.4599999999999px" width="18" height="16" viewBox="0 0 18 16"><path d="M10.4 1.0 L17.1 4.4 V10.9 L7.5 15.1 L1.1 11.4 V5.8 Z" fill="#75BEFF"/><path d="M4.6 4.6 L11.2 2.0 L13 4.3 L6.5 7.0 Z" fill="#2A2A2C"/></svg>
<svg class="a" style="left:171.0px;top:773.66px" width="11" height="12" viewBox="0 0 11 12"><path d="M2.8 5.2 V4.3 C2.8 1.2 8.4 1.2 8.4 4.3 V5.2" stroke="#252526" stroke-width="3.0" fill="none"/><rect x="0.6" y="4.4" width="10" height="7.2" fill="#252526"/><path d="M2.8 5.1 V4.4 C2.8 0.8 8.4 0.8 8.4 4.4 V5.1" stroke="#DDDDDD" stroke-width="1.5" fill="none"/><rect x="1.7" y="4.9" width="7.8" height="5.6" fill="#DDDDDD"/><rect x="4.9" y="6.9" width="1.4" height="1.6" fill="#252526"/></svg>
<div class="rt" style="left:194.6px;top:766.38px"><i style="color:#B078F2">button_Login</i><i style="color:#DCDCDC"> : </i><i style="color:#4EC9B0">Button</i><i style="color:#B5CEA8"> @04000019</i></div>
<svg class="a" style="left:158px;top:788.05px" width="18" height="16" viewBox="0 0 18 16"><path d="M10.4 1.0 L17.1 4.4 V10.9 L7.5 15.1 L1.1 11.4 V5.8 Z" fill="#75BEFF"/><path d="M4.6 4.6 L11.2 2.0 L13 4.3 L6.5 7.0 Z" fill="#2A2A2C"/></svg>
<svg class="a" style="left:171.0px;top:800.25px" width="11" height="12" viewBox="0 0 11 12"><path d="M2.8 5.2 V4.3 C2.8 1.2 8.4 1.2 8.4 4.3 V5.2" stroke="#252526" stroke-width="3.0" fill="none"/><rect x="0.6" y="4.4" width="10" height="7.2" fill="#252526"/><path d="M2.8 5.1 V4.4 C2.8 0.8 8.4 0.8 8.4 4.4 V5.1" stroke="#DDDDDD" stroke-width="1.5" fill="none"/><rect x="1.7" y="4.9" width="7.8" height="5.6" fill="#DDDDDD"/><rect x="4.9" y="6.9" width="1.4" height="1.6" fill="#252526"/></svg>
<div class="rt" style="left:194.6px;top:792.97px"><i style="color:#B078F2">components</i><i style="color:#DCDCDC"> : </i><i style="color:#B0AD90">IContainer</i><i style="color:#B5CEA8"> @04000014</i></div>
<svg class="a" style="left:158px;top:814.64px" width="18" height="16" viewBox="0 0 18 16"><path d="M10.4 1.0 L17.1 4.4 V10.9 L7.5 15.1 L1.1 11.4 V5.8 Z" fill="#75BEFF"/><path d="M4.6 4.6 L11.2 2.0 L13 4.3 L6.5 7.0 Z" fill="#2A2A2C"/></svg>
<svg class="a" style="left:171.0px;top:826.84px" width="11" height="12" viewBox="0 0 11 12"><path d="M2.8 5.2 V4.3 C2.8 1.2 8.4 1.2 8.4 4.3 V5.2" stroke="#252526" stroke-width="3.0" fill="none"/><rect x="0.6" y="4.4" width="10" height="7.2" fill="#252526"/><path d="M2.8 5.1 V4.4 C2.8 0.8 8.4 0.8 8.4 4.4 V5.1" stroke="#DDDDDD" stroke-width="1.5" fill="none"/><rect x="1.7" y="4.9" width="7.8" height="5.6" fill="#DDDDDD"/><rect x="4.9" y="6.9" width="1.4" height="1.6" fill="#252526"/></svg>
<div class="rt" style="left:194.6px;top:819.56px"><i style="color:#B078F2">Label1</i><i style="color:#DCDCDC"> : </i><i style="color:#4EC9B0">Label</i><i style="color:#B5CEA8"> @04000015</i></div>
<svg class="a" style="left:158px;top:841.2299999999999px" width="18" height="16" viewBox="0 0 18 16"><path d="M10.4 1.0 L17.1 4.4 V10.9 L7.5 15.1 L1.1 11.4 V5.8 Z" fill="#75BEFF"/><path d="M4.6 4.6 L11.2 2.0 L13 4.3 L6.5 7.0 Z" fill="#2A2A2C"/></svg>
<svg class="a" style="left:171.0px;top:853.43px" width="11" height="12" viewBox="0 0 11 12"><path d="M2.8 5.2 V4.3 C2.8 1.2 8.4 1.2 8.4 4.3 V5.2" stroke="#252526" stroke-width="3.0" fill="none"/><rect x="0.6" y="4.4" width="10" height="7.2" fill="#252526"/><path d="M2.8 5.1 V4.4 C2.8 0.8 8.4 0.8 8.4 4.4 V5.1" stroke="#DDDDDD" stroke-width="1.5" fill="none"/><rect x="1.7" y="4.9" width="7.8" height="5.6" fill="#DDDDDD"/><rect x="4.9" y="6.9" width="1.4" height="1.6" fill="#252526"/></svg>
<div class="rt" style="left:194.6px;top:846.15px"><i style="color:#B078F2">label2</i><i style="color:#DCDCDC"> : </i><i style="color:#4EC9B0">Label</i><i style="color:#B5CEA8"> @04000016</i></div>
<svg class="a" style="left:158px;top:867.8199999999999px" width="18" height="16" viewBox="0 0 18 16"><path d="M10.4 1.0 L17.1 4.4 V10.9 L7.5 15.1 L1.1 11.4 V5.8 Z" fill="#75BEFF"/><path d="M4.6 4.6 L11.2 2.0 L13 4.3 L6.5 7.0 Z" fill="#2A2A2C"/></svg>
<svg class="a" style="left:171.0px;top:880.02px" width="11" height="12" viewBox="0 0 11 12"><path d="M2.8 5.2 V4.3 C2.8 1.2 8.4 1.2 8.4 4.3 V5.2" stroke="#252526" stroke-width="3.0" fill="none"/><rect x="0.6" y="4.4" width="10" height="7.2" fill="#252526"/><path d="M2.8 5.1 V4.4 C2.8 0.8 8.4 0.8 8.4 4.4 V5.1" stroke="#DDDDDD" stroke-width="1.5" fill="none"/><rect x="1.7" y="4.9" width="7.8" height="5.6" fill="#DDDDDD"/><rect x="4.9" y="6.9" width="1.4" height="1.6" fill="#252526"/></svg>
<div class="rt" style="left:194.6px;top:872.74px"><i style="color:#B078F2">label_Result</i><i style="color:#DCDCDC"> : </i><i style="color:#4EC9B0">Label</i><i style="color:#B5CEA8"> @0400001A</i></div>
<svg class="a" style="left:158px;top:894.41px" width="18" height="16" viewBox="0 0 18 16"><path d="M10.4 1.0 L17.1 4.4 V10.9 L7.5 15.1 L1.1 11.4 V5.8 Z" fill="#75BEFF"/><path d="M4.6 4.6 L11.2 2.0 L13 4.3 L6.5 7.0 Z" fill="#2A2A2C"/></svg>
<svg class="a" style="left:171.0px;top:906.61px" width="11" height="12" viewBox="0 0 11 12"><path d="M2.8 5.2 V4.3 C2.8 1.2 8.4 1.2 8.4 4.3 V5.2" stroke="#252526" stroke-width="3.0" fill="none"/><rect x="0.6" y="4.4" width="10" height="7.2" fill="#252526"/><path d="M2.8 5.1 V4.4 C2.8 0.8 8.4 0.8 8.4 4.4 V5.1" stroke="#DDDDDD" stroke-width="1.5" fill="none"/><rect x="1.7" y="4.9" width="7.8" height="5.6" fill="#DDDDDD"/><rect x="4.9" y="6.9" width="1.4" height="1.6" fill="#252526"/></svg>
<div class="rt" style="left:194.6px;top:899.33px"><i style="color:#B078F2">m</i><i style="color:#DCDCDC"> : </i><i style="color:#569CD6">string</i><i style="color:#B5CEA8"> @0400000D</i></div>
<svg class="a" style="left:158px;top:921.0px" width="18" height="16" viewBox="0 0 18 16"><path d="M10.4 1.0 L17.1 4.4 V10.9 L7.5 15.1 L1.1 11.4 V5.8 Z" fill="#75BEFF"/><path d="M4.6 4.6 L11.2 2.0 L13 4.3 L6.5 7.0 Z" fill="#2A2A2C"/></svg>
<svg class="a" style="left:171.0px;top:933.20px" width="11" height="12" viewBox="0 0 11 12"><path d="M2.8 5.2 V4.3 C2.8 1.2 8.4 1.2 8.4 4.3 V5.2" stroke="#252526" stroke-width="3.0" fill="none"/><rect x="0.6" y="4.4" width="10" height="7.2" fill="#252526"/><path d="M2.8 5.1 V4.4 C2.8 0.8 8.4 0.8 8.4 4.4 V5.1" stroke="#DDDDDD" stroke-width="1.5" fill="none"/><rect x="1.7" y="4.9" width="7.8" height="5.6" fill="#DDDDDD"/><rect x="4.9" y="6.9" width="1.4" height="1.6" fill="#252526"/></svg>
<div class="rt" style="left:194.6px;top:925.92px"><i style="color:#B078F2">o</i><i style="color:#DCDCDC"> : </i><i style="color:#569CD6">string</i><i style="color:#B5CEA8"> @0400000A</i></div>
<svg class="a" style="left:158px;top:947.5899999999999px" width="18" height="16" viewBox="0 0 18 16"><path d="M10.4 1.0 L17.1 4.4 V10.9 L7.5 15.1 L1.1 11.4 V5.8 Z" fill="#75BEFF"/><path d="M4.6 4.6 L11.2 2.0 L13 4.3 L6.5 7.0 Z" fill="#2A2A2C"/></svg>
<svg class="a" style="left:171.0px;top:959.79px" width="11" height="12" viewBox="0 0 11 12"><path d="M2.8 5.2 V4.3 C2.8 1.2 8.4 1.2 8.4 4.3 V5.2" stroke="#252526" stroke-width="3.0" fill="none"/><rect x="0.6" y="4.4" width="10" height="7.2" fill="#252526"/><path d="M2.8 5.1 V4.4 C2.8 0.8 8.4 0.8 8.4 4.4 V5.1" stroke="#DDDDDD" stroke-width="1.5" fill="none"/><rect x="1.7" y="4.9" width="7.8" height="5.6" fill="#DDDDDD"/><rect x="4.9" y="6.9" width="1.4" height="1.6" fill="#252526"/></svg>
<div class="rt" style="left:194.6px;top:952.51px"><i style="color:#B078F2">oura</i><i style="color:#DCDCDC"> : </i><i style="color:#569CD6">string</i><i style="color:#B5CEA8"> @04000012</i></div>
<svg class="a" style="left:158px;top:974.18px" width="18" height="16" viewBox="0 0 18 16"><path d="M10.4 1.0 L17.1 4.4 V10.9 L7.5 15.1 L1.1 11.4 V5.8 Z" fill="#75BEFF"/><path d="M4.6 4.6 L11.2 2.0 L13 4.3 L6.5 7.0 Z" fill="#2A2A2C"/></svg>
<svg class="a" style="left:171.0px;top:986.38px" width="11" height="12" viewBox="0 0 11 12"><path d="M2.8 5.2 V4.3 C2.8 1.2 8.4 1.2 8.4 4.3 V5.2" stroke="#252526" stroke-width="3.0" fill="none"/><rect x="0.6" y="4.4" width="10" height="7.2" fill="#252526"/><path d="M2.8 5.1 V4.4 C2.8 0.8 8.4 0.8 8.4 4.4 V5.1" stroke="#DDDDDD" stroke-width="1.5" fill="none"/><rect x="1.7" y="4.9" width="7.8" height="5.6" fill="#DDDDDD"/><rect x="4.9" y="6.9" width="1.4" height="1.6" fill="#252526"/></svg>
<div class="rt" style="left:194.6px;top:979.10px"><i style="color:#B078F2">pep</i><i style="color:#DCDCDC"> : </i><i style="color:#569CD6">int</i><i style="color:#B5CEA8"> @04000010</i></div>
<svg class="a" style="left:158px;top:1000.77px" width="18" height="16" viewBox="0 0 18 16"><path d="M10.4 1.0 L17.1 4.4 V10.9 L7.5 15.1 L1.1 11.4 V5.8 Z" fill="#75BEFF"/><path d="M4.6 4.6 L11.2 2.0 L13 4.3 L6.5 7.0 Z" fill="#2A2A2C"/></svg>
<svg class="a" style="left:171.0px;top:1012.97px" width="11" height="12" viewBox="0 0 11 12"><path d="M2.8 5.2 V4.3 C2.8 1.2 8.4 1.2 8.4 4.3 V5.2" stroke="#252526" stroke-width="3.0" fill="none"/><rect x="0.6" y="4.4" width="10" height="7.2" fill="#252526"/><path d="M2.8 5.1 V4.4 C2.8 0.8 8.4 0.8 8.4 4.4 V5.1" stroke="#DDDDDD" stroke-width="1.5" fill="none"/><rect x="1.7" y="4.9" width="7.8" height="5.6" fill="#DDDDDD"/><rect x="4.9" y="6.9" width="1.4" height="1.6" fill="#252526"/></svg>
<div class="rt" style="left:194.6px;top:1005.69px"><i style="color:#B078F2">pepper</i><i style="color:#DCDCDC"> : </i><i style="color:#569CD6">int</i><i style="color:#B5CEA8"> @0400000F</i></div>
<svg class="a" style="left:158px;top:1027.36px" width="18" height="16" viewBox="0 0 18 16"><path d="M10.4 1.0 L17.1 4.4 V10.9 L7.5 15.1 L1.1 11.4 V5.8 Z" fill="#75BEFF"/><path d="M4.6 4.6 L11.2 2.0 L13 4.3 L6.5 7.0 Z" fill="#2A2A2C"/></svg>
<div class="a" style="left:699.7px;top:84.9px;width:362px;height:34px;background:#3F3F46"></div>
<div class="a" style="left:699.7px;top:118.9px;width:1312.3px;height:3.2px;background:#3F3F46"></div>
<div class="t" style="left:706px;top:92.9px;font-size:18.4px">button1_Click(object, EventArgs) : void</div>
<svg class="a" style="left:1036px;top:93px" width="20" height="18" viewBox="0 0 20 18"><path d="M2.8 2 L17.5 15.2 M17.5 2 L2.8 15.2" stroke="#7F7F7F" stroke-width="1.6"/></svg>
<div class="a" style="left:699px;top:122.1px;width:27.1px;height:908px;background:#333333"></div>
<div class="a" style="left:726.1px;top:122.1px;width:1268px;height:908px;background:#1E1E1E"></div>
<div class="a" style="left:807px;top:122.1px;width:1187px;height:26.3px;border:3.2px solid #454545"></div>
<div class="a" style="left:1993.8px;top:122.1px;width:20px;height:908px;background:#3E3E42"></div>
<svg class="a" style="left:1996px;top:128px" width="16" height="13" viewBox="0 0 16 13"><path d="M4.4 10.8 L11.3 3.3 L18.2 10.8 Z" fill="#999999"/></svg>
<div class="a" style="left:2000px;top:148px;width:12px;height:632.4px;background:#686868"></div>
<div class="ln" style="top:126.15px">1</div>
<div class="code" style="left:810px;top:126.15px;letter-spacing:0px"><i style="color:#57A64A">// TearORDear.LoginForm</i></div>
<div class="ln" style="top:152.75px">2</div>
<div class="code" style="left:810px;top:152.75px;letter-spacing:0px"><i style="color:#57A64A">// Token: 0x0600000B RID: 11 RVA: 0x0000288C File Offset: 0x00000A8C</i></div>
<div class="ln" style="top:179.35px">3</div>
<div class="code" style="left:810px;top:179.35px;letter-spacing:0px"><i style="color:#569CD6">private</i> <i style="color:#569CD6">void</i> <i style="color:#FF8000">button1_Click</i><i style="color:#DCDCDC">(</i><i style="color:#569CD6">object</i> <b>sender</b><i style="color:#DCDCDC">, </i><i style="color:#4EC9B0">EventArgs</i> <b>e</b><i style="color:#DCDCDC">)</i></div>
<div class="ln" style="top:200.95px">4</div>
<div class="code" style="left:810.00px;top:201.63px;font-size:15.67px;color:#DCDCDC">{</div>
<div class="ln" style="top:225.85px">5</div>
<div class="code" style="left:810px;top:225.85px;letter-spacing:0px">    <i style="color:#569CD6">this</i><i style="color:#B4B4B4">.</i><i style="color:#B078F2">label_Result</i><i style="color:#B4B4B4">.</i><i style="color:#20A0A0">Text</i><i style="color:#B4B4B4"> = </i><i style="color:#D69D85">""</i><i style="color:#DCDCDC">;</i></div>
<div class="ln" style="top:252.45px">6</div>
<div class="code" style="left:810px;top:252.45px;letter-spacing:0px">    <i style="color:#569CD6">this</i><i style="color:#B4B4B4">.</i><i style="color:#FF8000">kapa</i><i style="color:#DCDCDC">(</i><b>sender</b><i style="color:#DCDCDC">, </i><b>e</b><i style="color:#DCDCDC">);</i></div>
<div class="ln" style="top:279.05px">7</div>
<div class="code" style="left:810px;top:279.05px;letter-spacing:0px">    <i style="color:#569CD6">this</i><i style="color:#B4B4B4">.</i><i style="color:#B078F2">pep</i><i style="color:#B4B4B4"> = </i><i style="color:#B5CEA8">0</i><i style="color:#DCDCDC">;</i></div>
<div class="ln" style="top:305.65px">8</div>
<div class="code" style="left:810px;top:305.65px;letter-spacing:0px">    <i style="color:#569CD6">this</i><i style="color:#B4B4B4">.</i><i style="color:#B078F2">aa</i><i style="color:#B4B4B4"> = </i><i style="color:#569CD6">this</i><i style="color:#B4B4B4">.</i><i style="color:#FF8000">Multiply</i><i style="color:#DCDCDC">(</i><i style="color:#569CD6">this</i><i style="color:#B4B4B4">.</i><i style="color:#FF8000">encrypted1</i><i style="color:#DCDCDC">(</i><i style="color:#569CD6">this</i><i style="color:#B4B4B4">.</i><i style="color:#B078F2">textBox_user</i><i style="color:#B4B4B4">.</i><i style="color:#20A0A0">Text</i><i style="color:#DCDCDC">).</i><i style="color:#FF8000">Substring</i><i style="color:#DCDCDC">(</i><i style="color:#B5CEA8">0</i><i style="color:#DCDCDC">, </i><i style="color:#B5CEA8">5</i><i style="color:#DCDCDC">), </i><i style="color:#B4B4B4">-</i><i style="color:#B5CEA8">1</i><i style="color:#DCDCDC">);</i></div>
<div class="ln" style="top:332.25px">9</div>
<div class="code" style="left:810px;top:332.25px;letter-spacing:0px">    <i style="color:#569CD6">this</i><i style="color:#B4B4B4">.</i><i style="color:#B078F2">aa</i><i style="color:#B4B4B4"> = </i><i style="color:#569CD6">this</i><i style="color:#B4B4B4">.</i><i style="color:#B078F2">aa</i><i style="color:#B4B4B4">.</i><i style="color:#FF8000">Remove</i><i style="color:#DCDCDC">(</i><i style="color:#569CD6">this</i><i style="color:#B4B4B4">.</i><i style="color:#B078F2">aa</i><i style="color:#B4B4B4">.</i><i style="color:#20A0A0">Length</i><i style="color:#B4B4B4"> - </i><i style="color:#B5CEA8">1</i><i style="color:#DCDCDC">);</i></div>
<div class="ln" style="top:358.85px">10</div>
<div class="code" style="left:810px;top:358.85px;letter-spacing:0px">    <i style="color:#569CD6">string</i><i style="color:#DCDCDC"> s</i><i style="color:#B4B4B4"> = </i><i style="color:#569CD6">this</i><i style="color:#B4B4B4">.</i><i style="color:#FF8000">Multiply</i><i style="color:#DCDCDC">(</i><i style="color:#569CD6">this</i><i style="color:#B4B4B4">.</i><i style="color:#B078F2">oura</i><i style="color:#DCDCDC">, </i><i style="color:#B4B4B4">-</i><i style="color:#B5CEA8">9</i><i style="color:#DCDCDC">);</i></div>
<div class="ln" style="top:385.45px">11</div>
<div class="code" style="left:810px;top:385.45px;letter-spacing:0px">    <i style="color:#569CD6">if</i><i style="color:#DCDCDC"> (</i><i style="color:#569CD6">this</i><i style="color:#B4B4B4">.</i><i style="color:#B078F2">username</i><i style="color:#B4B4B4"> == </i><i style="color:#569CD6">this</i><i style="color:#B4B4B4">.</i><i style="color:#B078F2">o</i><i style="color:#B4B4B4"> &amp;&amp; </i><i style="color:#569CD6">this</i><i style="color:#B4B4B4">.</i><i style="color:#FF8000">check1</i><i style="color:#DCDCDC">(</i><i style="color:#DCDCDC">s</i><i style="color:#DCDCDC">))</i></div>
<div class="ln" style="top:407.05px">12</div>
<div class="code" style="left:853.72px;top:407.73px;font-size:15.67px;color:#DCDCDC">{</div>
<div class="ln" style="top:431.95px">13</div>
<div class="code" style="left:810px;top:431.95px;letter-spacing:0px">        <i style="color:#4EC9B0">MessageBox</i><i style="color:#B4B4B4">.</i><i style="color:#FF8000">Show</i><i style="color:#DCDCDC">(</i><i style="color:#D69D85">"Correct!"</i><i style="color:#DCDCDC">);</i></div>
<div class="ln" style="top:458.55px">14</div>
<div class="code" style="left:810px;top:458.55px;letter-spacing:0px">        <i style="color:#569CD6">return</i><i style="color:#DCDCDC">;</i></div>
<div class="ln" style="top:480.15px">15</div>
<div class="code" style="left:853.72px;top:480.83px;font-size:15.67px;color:#DCDCDC">}</div>
<div class="ln" style="top:505.05px">16</div>
<div class="code" style="left:810px;top:505.05px;letter-spacing:0px">    <i style="color:#569CD6">this</i><i style="color:#B4B4B4">.</i><i style="color:#B078F2">label_Result</i><i style="color:#B4B4B4">.</i><i style="color:#20A0A0">Text</i><i style="color:#B4B4B4"> = </i><i style="color:#D69D85">"WRONG CREDENTIALS! Try Again..."</i><i style="color:#DCDCDC">;</i></div>
<div class="ln" style="top:526.65px">17</div>
<div class="code" style="left:810.00px;top:527.33px;font-size:15.67px;color:#DCDCDC">}</div>
<div class="ln" style="top:546.55px">18</div>
<svg class="a" style="left:814.9px;top:221.6px" width="2" height="302.4"><g fill="#1D4A6B"><rect x="0" y="0.00" width="2" height="4.40"/><rect x="0" y="9.26" width="2" height="4.40"/><rect x="0" y="18.52" width="2" height="4.40"/><rect x="0" y="27.78" width="2" height="4.40"/><rect x="0" y="37.04" width="2" height="4.40"/><rect x="0" y="46.30" width="2" height="4.40"/><rect x="0" y="55.56" width="2" height="4.40"/><rect x="0" y="64.82" width="2" height="4.40"/><rect x="0" y="74.08" width="2" height="4.40"/><rect x="0" y="83.34" width="2" height="4.40"/><rect x="0" y="92.60" width="2" height="4.40"/><rect x="0" y="101.86" width="2" height="4.40"/><rect x="0" y="111.12" width="2" height="4.40"/><rect x="0" y="120.38" width="2" height="4.40"/><rect x="0" y="129.64" width="2" height="4.40"/><rect x="0" y="138.90" width="2" height="4.40"/><rect x="0" y="148.16" width="2" height="4.40"/><rect x="0" y="157.42" width="2" height="4.40"/><rect x="0" y="166.68" width="2" height="4.40"/><rect x="0" y="175.94" width="2" height="4.40"/><rect x="0" y="185.20" width="2" height="4.40"/><rect x="0" y="194.46" width="2" height="4.40"/><rect x="0" y="203.72" width="2" height="4.40"/><rect x="0" y="212.98" width="2" height="4.40"/><rect x="0" y="222.24" width="2" height="4.40"/><rect x="0" y="231.50" width="2" height="4.40"/><rect x="0" y="240.76" width="2" height="4.40"/><rect x="0" y="250.02" width="2" height="4.40"/><rect x="0" y="259.28" width="2" height="4.40"/><rect x="0" y="268.54" width="2" height="4.40"/><rect x="0" y="277.80" width="2" height="4.40"/><rect x="0" y="287.06" width="2" height="4.40"/><rect x="0" y="296.32" width="2" height="4.40"/></g></svg>
<svg class="a" style="left:858.6px;top:428.5px" width="2" height="52.5"><g fill="#2A522A"><rect x="0" y="0.00" width="2" height="4.40"/><rect x="0" y="9.26" width="2" height="4.40"/><rect x="0" y="18.52" width="2" height="4.40"/><rect x="0" y="27.78" width="2" height="4.40"/><rect x="0" y="37.04" width="2" height="4.40"/><rect x="0" y="46.30" width="2" height="4.40"/></g></svg>
<div class="a" style="left:807px;top:547.1px;width:1187px;height:1.7px;background:#A0A0A0"></div>
<svg class="a" style="left:1058px;top:699px" width="22" height="34" viewBox="0 0 22 34">
<path d="M3 4.6 H8.3 L10.5 6.3 L12.7 4.6 H18 M3 28.3 H8.3 L10.5 26.5 L12.7 28.3 H18 M10.5 6 V27" stroke="#111" stroke-width="4.4" fill="none"/>
<path d="M3 4.6 H8.3 L10.5 6.3 L12.7 4.6 H18 M3 28.3 H8.3 L10.5 26.5 L12.7 28.3 H18 M10.5 6 V27" stroke="#F0F0F0" stroke-width="2.6" fill="none"/>
</svg>
</body></html>
